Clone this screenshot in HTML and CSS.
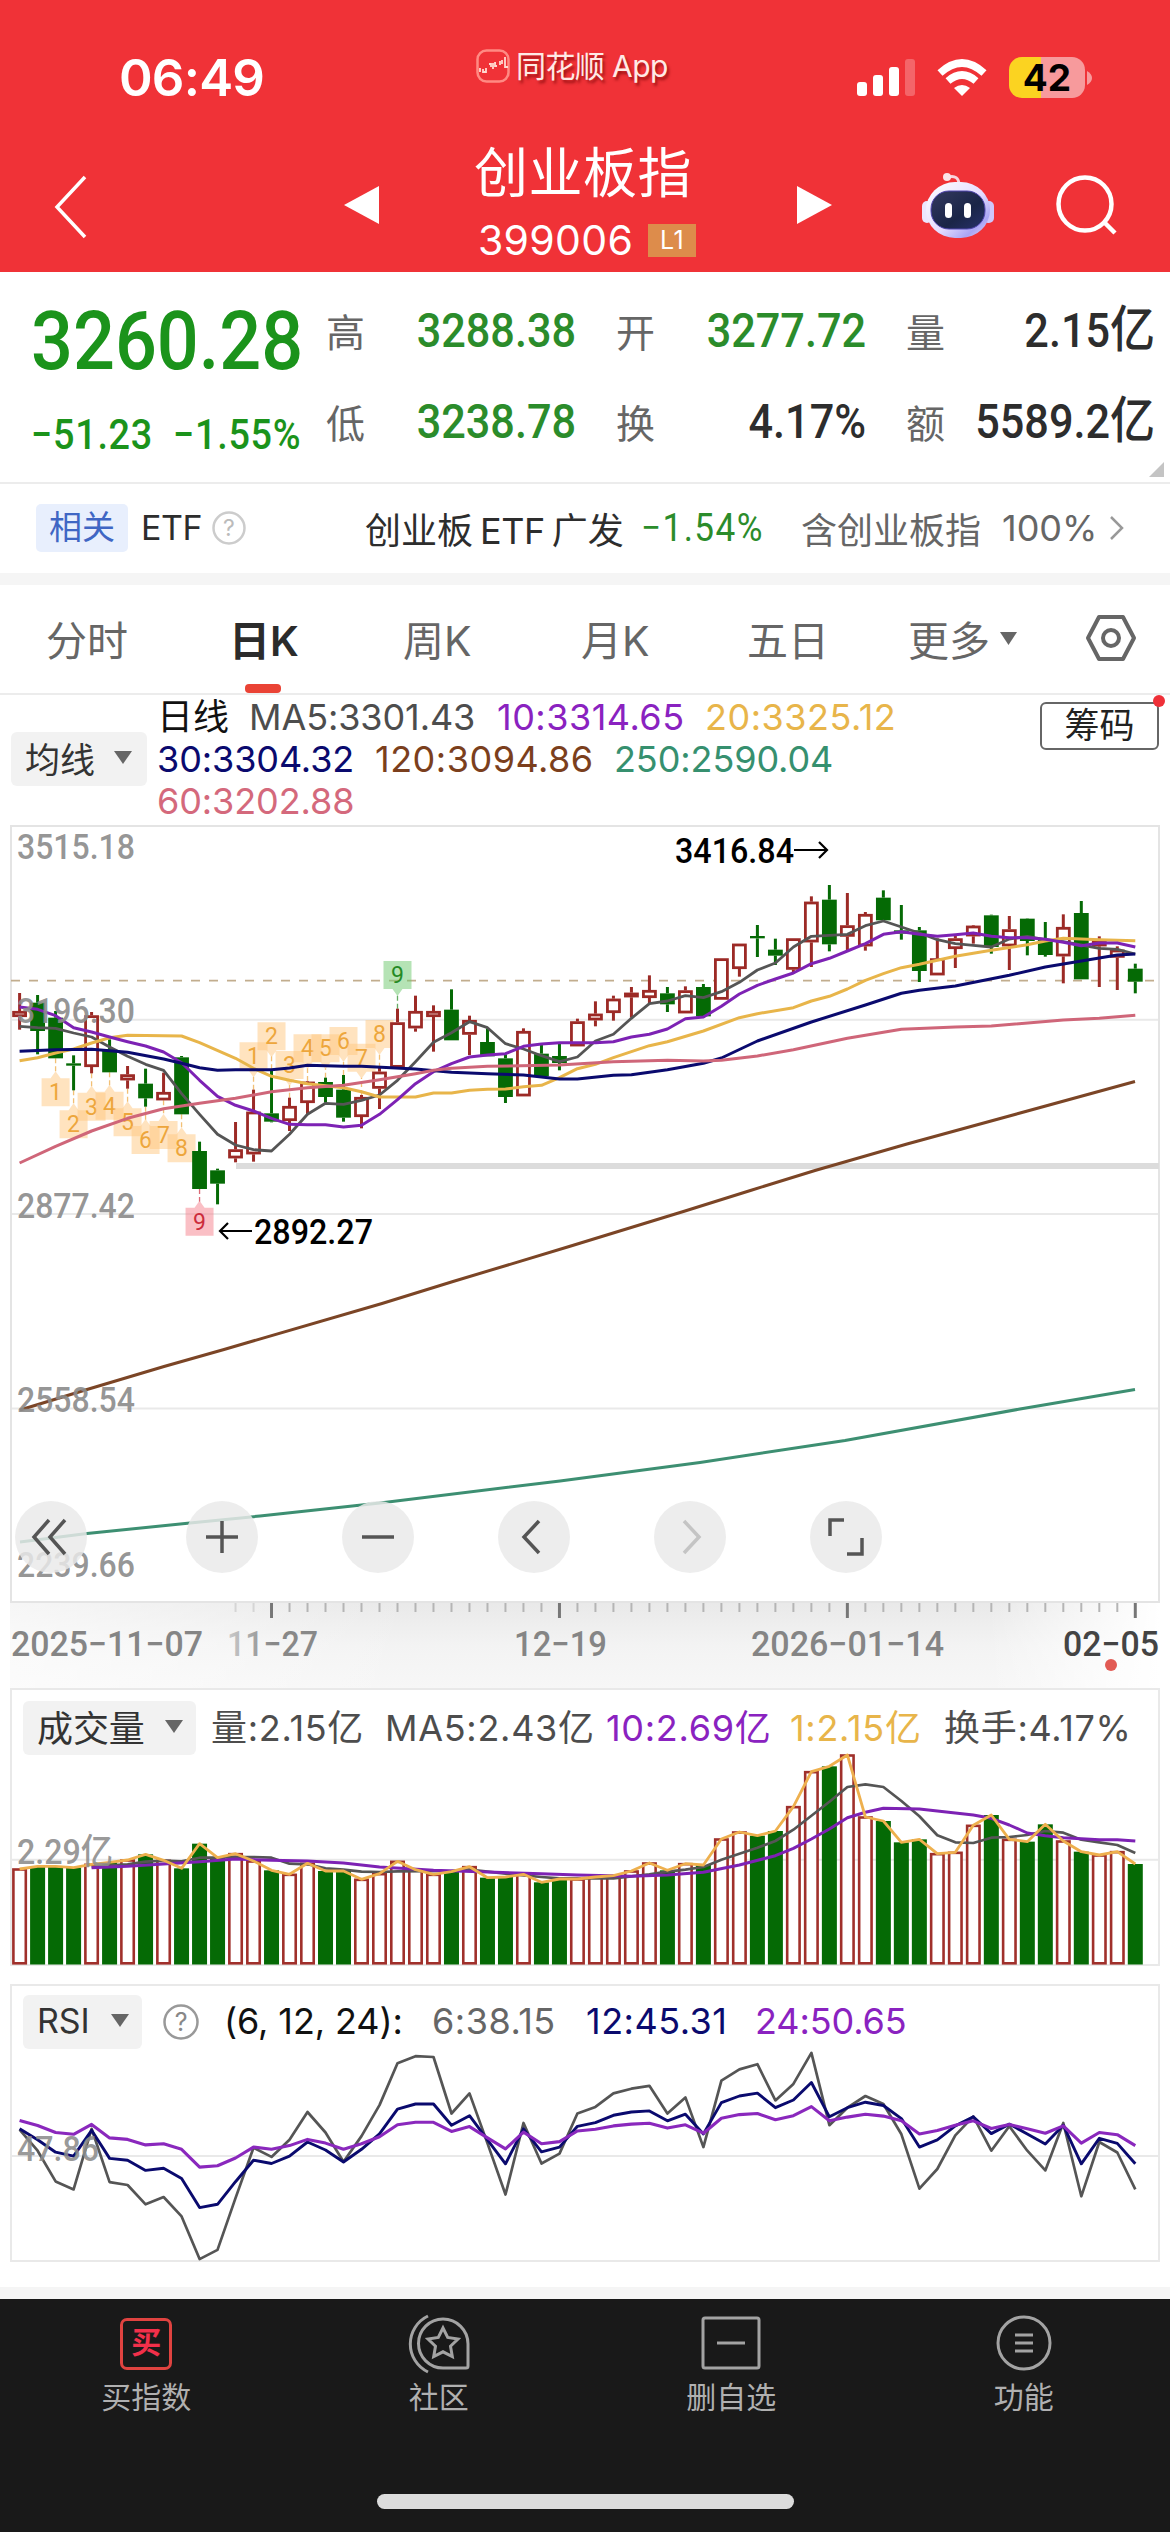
FILE: index.html
```html
<!DOCTYPE html>
<html lang="zh-CN">
<head>
<meta charset="utf-8">
<title>创业板指 399006</title>
<link rel="stylesheet" href="styles.css">
</head>
<body>
<header class="header">
  <div class="status">
    <span class="clock">06:49</span>
    <span class="brand">
      <svg width="34" height="34" viewBox="0 0 34 34" fill="none" stroke="#ffd9d0"><rect x="1.5" y="1.5" width="31" height="31" rx="9" stroke="#ff8a83" stroke-width="2.5"/><path d="M4 19v4M7 20v3h3v-4M13 15h2v3M17 14v6M20 14h-1v3h2M24 12v4M26 11v4M29 8v10h3" stroke-width="1.8"/></svg>
      <span>同花顺 App</span>
    </span>
    <span class="signals">
      <svg width="58" height="37" viewBox="0 0 58 37" fill="#fff"><rect x="0" y="23" width="10" height="14" rx="3"/><rect x="16" y="16" width="10" height="21" rx="3"/><rect x="32" y="8" width="10" height="29" rx="3"/><rect x="48" y="0" width="10" height="37" rx="3" opacity=".25"/></svg>
      <svg width="50" height="37" viewBox="0 0 50 37" fill="none" stroke="#fff" stroke-width="7.5"><path d="M3 14Q25-6 47 14"/><path d="M11 22Q25 10 39 22"/><path d="M25 37L17 29Q25 23 33 29Z" fill="#fff" stroke="none"/></svg>
      <span class="battery">42</span>
      <svg class="cap" width="5" height="14" viewBox="0 0 5 14"><path d="M0 0Q5 3 5 7T0 14Z" fill="#f79a9c"/></svg>
    </span>
  </div>
  <div class="titlebar">
    <svg class="back" width="34" height="64" viewBox="0 0 34 64" fill="none" stroke="#fff" stroke-width="3.5"><path d="M31 2L3 32L31 62"/></svg>
    <svg class="prev" width="36" height="40" viewBox="0 0 36 40"><path d="M35 1V39L0 20Z" fill="#fff"/></svg>
    <div class="title">
      <h1>创业板指</h1>
      <div class="code"><span>399006</span><em>L1</em></div>
    </div>
    <svg class="next" width="36" height="40" viewBox="0 0 36 40"><path d="M1 1V39L36 20Z" fill="#fff"/></svg>
    <svg class="robot" width="74" height="68" viewBox="0 0 74 68">
      <defs><linearGradient id="shell" x1="0" y1="0" x2="1" y2="1"><stop offset="0" stop-color="#fff"/><stop offset=".55" stop-color="#e4dcff"/><stop offset=".8" stop-color="#a9a5f5"/><stop offset="1" stop-color="#f3dcf5"/></linearGradient><linearGradient id="face" x1="0" y1="0" x2="1" y2="1"><stop offset="0" stop-color="#34395f"/><stop offset=".6" stop-color="#1a2547"/><stop offset="1" stop-color="#27306b"/></linearGradient></defs>
      <path d="M27 6C34 4 38 7 38 14" fill="none" stroke="#f8d4dc" stroke-width="3"/><circle cx="26" cy="6" r="4" fill="#fbe3e8"/>
      <rect x="1" y="30" width="10" height="22" rx="5" fill="#ece6ff"/><rect x="62" y="30" width="11" height="22" rx="5" fill="#cfc6fa"/>
      <rect x="5" y="11" width="64" height="56" rx="29" fill="url(#shell)"/>
      <rect x="10" y="20" width="54" height="38" rx="18" fill="url(#face)" stroke="#5146b0" stroke-width="1"/>
      <rect x="24" y="32" width="7" height="15" rx="3.5" fill="#fff"/><rect x="43" y="32" width="7" height="15" rx="3.5" fill="#fff"/>
    </svg>
    <svg class="search" width="62" height="62" viewBox="0 0 62 62" fill="none" stroke="#fff" stroke-width="4.5"><circle cx="30" cy="30" r="26.5"/><path d="M49 48L60 59"/></svg>
  </div>
</header>

<section class="quote">
  <div class="last">
    <div class="price din">3260.28</div>
    <div class="change"><span class="din">−51.23</span><span class="din">−1.55%</span></div>
  </div>
  <div class="stats">
    <span class="k">高</span><span class="v down din">3288.38</span>
    <span class="k">开</span><span class="v down din">3277.72</span>
    <span class="k">量</span><span class="v din wide">2.15<i>亿</i></span>
    <span class="k">低</span><span class="v down din">3238.78</span>
    <span class="k">换</span><span class="v din">4.17%</span>
    <span class="k">额</span><span class="v din wide">5589.2<i>亿</i></span>
  </div>
  <svg class="corner" width="15" height="15" viewBox="0 0 15 15"><path d="M15 0V15H0Z" fill="#c4c4c4"/></svg>
</section>

<section class="related">
  <span class="tag">相关</span><span class="etf">ETF</span>
  <svg class="help" width="34" height="34" viewBox="0 0 34 34"><circle cx="17" cy="17" r="15.5" fill="none" stroke="#ccc" stroke-width="2.5"/><text x="17" y="25" text-anchor="middle" font-size="23" fill="#bbb">?</text></svg>
  <span class="fund">创业板<b>ETF</b>广发</span><span class="pct din">−1.54%</span><span class="holds">含创业板指</span><span class="weight">100%</span>
  <svg width="16" height="26" viewBox="0 0 16 26" fill="none" stroke="#999" stroke-width="2.5"><path d="M2 2L13 13L2 24"/></svg>
</section>
<div class="strip"></div>

<nav class="tabs">
  <span class="tab">分时</span><span class="tab on">日K</span><span class="tab">周K</span><span class="tab">月K</span><span class="tab">五日</span>
  <span class="tab more">更多<svg width="19" height="13" viewBox="0 0 19 13"><path d="M1 0H18L9.500 13Z" fill="#666"/></svg></span>
  <svg class="gear" width="52" height="48" viewBox="0 0 52 48" fill="none" stroke="#666" stroke-width="4"><path d="M14 3H38L49 24L38 45H14L3 24Z" stroke-linejoin="round"/><circle cx="26" cy="24" r="8"/></svg>
</nav>

<section class="ma">
  <span class="pick">均线<svg width="18" height="13" viewBox="0 0 18 13"><path d="M0 0H18L9 13Z" fill="#666"/></svg></span>
  <div class="lines">
    <div class="row r1"><span class="c-black">日线</span><span class="c-gray">MA5:3301.43</span><span class="c-purple loose">10:3314.65</span><span class="c-gold loose">20:3325.12</span></div>
    <div class="row r2"><span class="c-navy">30:3304.32</span><span class="c-brown loose">120:3094.86</span><span class="c-teal">250:2590.04</span></div>
    <div class="row r2"><span class="c-pink">60:3202.88</span></div>
  </div>
  <span class="chips">筹码</span>
</section>

<section class="kline">
  <svg id="kline" width="1170" height="778" viewBox="0 824 1170 778"></svg>
  <div class="tools">
    <span class="tool"><svg width="40" height="40" viewBox="0 0 40 40"><path d="M18 3L3 20L18 37M34 3L19 20L34 37"/></svg></span>
    <span class="tool"><svg width="40" height="40" viewBox="0 0 40 40"><path d="M4 20H36M20 4V36"/></svg></span>
    <span class="tool"><svg width="40" height="40" viewBox="0 0 40 40"><path d="M4 20H36"/></svg></span>
    <span class="tool"><svg width="40" height="40" viewBox="0 0 40 40"><path d="M25 4L10 20L25 36"/></svg></span>
    <span class="tool off"><svg width="40" height="40" viewBox="0 0 40 40"><path d="M14 4L29 20L14 36"/></svg></span>
    <span class="tool"><svg width="40" height="40" viewBox="0 0 40 40"><path d="M18 3H4V19M36 21V37H21"/></svg></span>
  </div>
</section>
<section class="axis"><svg id="axis" width="1170" height="85" viewBox="0 1602 1170 85"></svg></section>

<section class="panel volume">
  <div class="legend">
    <span class="pick">成交量<svg width="18" height="13" viewBox="0 0 18 13"><path d="M0 0H18L9 13Z" fill="#666"/></svg></span>
    <span class="c-gray v1">量:2.15亿</span><span class="c-gray v2">MA5:2.43亿</span><span class="c-purple v3">10:2.69亿</span><span class="c-gold v4">1:2.15亿</span><span class="c-gray">换手:4.17%</span>
  </div>
  <svg id="volume" class="plot" width="1170" height="278" viewBox="0 1687 1170 278"></svg>
</section>

<section class="panel rsi">
  <div class="legend">
    <span class="pick">RSI<svg width="18" height="13" viewBox="0 0 18 13"><path d="M0 0H18L9 13Z" fill="#666"/></svg></span>
    <svg class="help2" width="38" height="38" viewBox="0 0 38 38"><circle cx="19" cy="19" r="16.500" fill="none" stroke="#999" stroke-width="2.5"/><text x="19" y="28" text-anchor="middle" font-size="25" fill="#888">?</text></svg>
    <span class="c-black p1">(6, 12, 24):</span><span class="c-mid p2">6:38.15</span><span class="c-navy p3">12:45.31</span><span class="c-purple">24:50.65</span>
  </div>
  <svg id="rsi" class="plot" width="1170" height="278" viewBox="0 1983 1170 278"></svg>
</section>
<div class="strip"></div>

<footer class="dock">
  <div class="items">
    <span class="item"><i class="buy">买</i>买指数</span>
    <span class="item"><svg width="62" height="60" viewBox="0 0 62 60" fill="none" stroke="#a3a3a3" stroke-width="3"><path d="M20 2A31 31 0 0 0 20 58"/><path d="M35 5A24.500 24.500 0 0 0 35 54H58Q60 54 60 52V30A25 25 0 0 0 35 5Z"/><path d="M35 14L39.700 23.500L50 25L42.500 32.300L44.300 42.500L35 37.800L25.700 42.500L27.500 32.300L20 25L30.300 23.500Z"/></svg>社区</span>
    <span class="item"><svg width="60" height="60" viewBox="0 0 60 60" fill="none" stroke="#a3a3a3" stroke-width="3"><rect x="2" y="4" width="56" height="50" rx="2"/><path d="M16 29H44"/></svg>删自选</span>
    <span class="item"><svg width="60" height="60" viewBox="0 0 60 60" fill="none" stroke="#a3a3a3" stroke-width="3"><circle cx="30" cy="29" r="26"/><path d="M21 21H39M21 29H39M21 37H39"/></svg>功能</span>
  </div>
  <div class="home"></div>
</footer>
<script src="charts.js"></script>
</body>
</html>
```
FILE: styles.css
```css
* { box-sizing: border-box; }
body { margin: 0; width: 1170px; height: 2532px; background: #fff; color: #333; font-family: Inter, "Noto Sans CJK SC", sans-serif; overflow: hidden; }
svg { display: block; flex: none; }
svg text { font-family: Inter, "Noto Sans CJK SC", sans-serif; }
em, i { font-style: normal; }
span { white-space: nowrap; }
.din { font-family: Roboto, "Noto Sans CJK SC", sans-serif; display: inline-block; transform: scaleX(.9); transform-origin: left center; }

.header { height: 272px; background: #f03237; color: #fff; }
.status { height: 140px; display: flex; align-items: flex-start; }
.clock { margin-left: 119px; width: 357px; padding-top: 46px; font-size: 51px; line-height: 64px; font-weight: 600; letter-spacing: -.8px; }
.brand { display: flex; gap: 6px; align-items: center; padding-top: 42px; font-size: 30px; line-height: 48px; width: 381px; color: #ffeae6; letter-spacing: -.6px; text-shadow: 2px 3px 3px rgba(110, 0, 0, .65); }
.signals { display: flex; align-items: center; padding-top: 57px; }
.signals svg:nth-child(2) { margin: 0 22px 0 22px; }
.battery { width: 76px; height: 41px; border-radius: 13px; background: linear-gradient(90deg, #fbd321 42%, #f79a9c 42%); color: #000; font-size: 37px; line-height: 41px; font-weight: 700; text-align: center; }
.cap { margin-left: 2px; }
.titlebar { display: flex; height: 132px; align-items: flex-start; }
.back { margin: 35px 0 0 54px; }
.prev { margin: 45px 0 0 256px; }
.title { margin-left: 94px; width: 224px; }
.title h1 { margin: 3px 0 0; font-size: 54px; line-height: 62px; font-weight: 400; letter-spacing: .5px; }
.code { display: flex; margin: 12px 0 0 4px; height: 46px; align-items: center; font-size: 41px; letter-spacing: .3px; }
.code span { width: 170px; }
.code em { width: 48px; height: 33px; background: #dd8c4b; font-size: 25px; line-height: 33px; text-align: center; }
.next { margin: 45px 0 0 98px; }
.robot { margin: 31px 0 0 89px; }
.search { margin: 34px 0 0 60px; }

.quote { height: 212px; border-bottom: 2px solid #ececec; display: flex; position: relative; }
.last { width: 326px; padding-left: 31px; color: #1b931b; }
.price { font-size: 82px; line-height: 90px; margin-top: 24px; font-weight: 500; }
.change { display: flex; font-size: 42px; line-height: 50px; margin-top: 24px; font-weight: 500; letter-spacing: .8px; }
.change span:first-child { width: 142px; }
.stats { display: grid; grid-template-columns: 46px 204px 86px 204px 86px 203px; grid-template-rows: 91px 91px; padding-top: 13px; align-items: center; width: 830px; }
.k { font-size: 39px; color: #666; padding: 0 0 2px 40px; }
.k:nth-child(6n+1) { padding-left: 0; }
.v { font-size: 48px; line-height: 60px; text-align: right; transform-origin: right center; font-weight: 500; color: #2d2d2d; }
.v i { font-size: 50px; font-weight: 500; }
.down { color: #2b8c2b; }
.corner { position: absolute; right: 6px; bottom: 5px; }

.related { height: 89px; display: flex; align-items: center; font-size: 35px; padding: 0 0 2px 36px; color: #2d2d2d; }
.tag { width: 92px; height: 48px; border-radius: 5px; background: #e8effd; color: #3f66c4; font-size: 33px; line-height: 46px; text-align: center; margin-right: 13px; }
.etf { width: 71px; font-size: 34px; letter-spacing: -.5px; }
.help { margin-right: 119px; }
.fund { width: 276px; font-size: 36px; }
.fund b { font-weight: 400; font-size: 36px; margin: 0 7px 0 7px; letter-spacing: -.5px; }
.pct { width: 160px; font-size: 39px; color: #2b8c2b; letter-spacing: 1.6px; }
.holds { width: 201px; font-size: 36px; color: #666; }
.weight { width: 107px; font-size: 36px; color: #666; }
.strip { height: 12px; background: #f5f5f5; }

.tabs { height: 110px; border-bottom: 2px solid #ececec; position: relative; display: grid; grid-template-columns: 183px 174px 178px 166px 161px 177px 60px; padding: 0 0 2px 46px; align-items: center; font-size: 41px; color: #666; }
.tab.on { color: #2b2b2b; font-weight: 600; position: relative; }
.tab.on::after { content: ""; position: absolute; left: 16px; top: 76px; width: 36px; height: 9px; border-radius: 4px; background: #ea4335; }
.more { display: flex; align-items: center; gap: 9px; }

.ma { height: 130px; display: flex; position: relative; }
.pick { height: 54px; border-radius: 6px; background: #f2f2f2; color: #333; font-size: 36px; display: flex; align-items: center; justify-content: space-between; padding: 0 15px 3px 14px; flex: none; }
.ma .pick { margin: 37px 10px 0 11px; width: 136px; font-size: 35px; }
.lines { padding-top: 1px; font-size: 36px; letter-spacing: -.1px; }
.loose { letter-spacing: .5px; }
.row { height: 42px; line-height: 42px; display: grid; }
.r1 { grid-template-columns: 92px 248px 208px 200px; }
.r2 { grid-template-columns: 218px 239px 240px; }
.chips { position: absolute; left: 1040px; top: 7px; width: 119px; height: 48px; border: 2px solid #666; border-radius: 6px; text-align: center; font-size: 35px; line-height: 42px; color: #222; }
.chips::after { content: ""; position: absolute; right: -8px; top: -9px; width: 12px; height: 12px; border-radius: 50%; background: #ef3038; }
.c-black { color: #111; } .c-gray { color: #4d4d4d; } .c-mid { color: #666; } .c-purple { color: #8a22c0; } .c-gold { color: #e8b54a; }
.c-navy { color: #0a0a6e; } .c-brown { color: #7b3f1d; } .c-teal { color: #36906f; } .c-pink { color: #d4697c; }

.kline { position: relative; height: 778px; }
.tools { position: absolute; left: 15px; top: 676px; display: flex; gap: 84px; }
.tool { width: 72px; height: 72px; border-radius: 50%; background: rgba(233, 233, 233, .84); display: flex; align-items: center; justify-content: center; }
.tool:first-child { margin-right: 15px; }
.tool path { fill: none; stroke: #555; stroke-width: 3.5; }
.tool.off path { stroke: #c4c4c4; }
.axis { height: 85px; }
.panel { position: relative; height: 278px; margin-bottom: 18px; }
.rsi { margin-bottom: 25px; }
.plot { position: absolute; left: 0; top: 0; z-index: -1; }
.legend { display: flex; align-items: center; padding: 11px 0 0 23px; font-size: 36px; letter-spacing: -.1px; }
.legend > span:not(.pick) { padding-bottom: 3px; }
.volume .legend > span:not(.pick) { letter-spacing: .7px; padding-bottom: 5px; }
.volume .pick { width: 173px; margin-right: 15px; padding-right: 13px; }
.v1 { width: 174px; } .v2 { width: 221px; } .v3 { width: 184px; } .v4 { width: 154px; }
.rsi .pick { width: 119px; margin-right: 20px; font-size: 34px; padding-right: 13px; }
.help2 { margin-right: 24px; }
.p1 { width: 208px; } .p2 { width: 154px; letter-spacing: .5px; } .p3 { width: 169px; letter-spacing: .5px; }

.dock { height: 234px; background: #191919; position: relative; }
.items { display: grid; grid-template-columns: repeat(4, 1fr); padding-top: 15px; }
.item { display: flex; flex-direction: column; align-items: center; color: #b0b0b0; font-size: 30px; line-height: 46px; }
.item svg { margin-bottom: 0; }
.buy { width: 52px; height: 52px; border: 3px solid #e04340; border-radius: 7px; color: #f2304a; font-size: 30px; font-weight: 700; line-height: 43px; text-align: center; margin: 4px 0; }
.home { width: 417px; height: 15px; border-radius: 8px; background: #dcdcdc; margin: 74px auto 0; }
```
FILE: charts.js
```js
const NS = 'http://www.w3.org/2000/svg';
const GREEN = '#056a05', RED = '#9c2a26';
const GRAY = '#555', PURPLE = '#7d22b4', GOLD = '#e8b54a', NAVY = '#0a0a6e', PINK = '#cf6679';
const X = i => 19.6 + 17.995 * i;

function add(svg, tag, attrs, text) {
  const el = document.createElementNS(NS, tag);
  for (const k in attrs) el.setAttribute(k, attrs[k]);
  if (text) el.textContent = text;
  svg.appendChild(el);
}
function line(svg, x1, y1, x2, y2, stroke, width, extra) {
  add(svg, 'line', Object.assign({ x1, y1, x2, y2, stroke, 'stroke-width': width }, extra));
}
function curve(svg, points, stroke, width) {
  add(svg, 'polyline', { points: points.map(p => p.map(n => n.toFixed(1)).join()).join(' '), fill: 'none', stroke, 'stroke-width': width, 'stroke-linejoin': 'round' });
}
function label(svg, text, x, y, length, fill, weight, size) {
  add(svg, 'text', { x, y, textLength: length, lengthAdjust: 'spacingAndGlyphs', fill, 'font-weight': weight || 400, 'font-size': size || 35, style: 'font-family: Roboto, "Noto Sans CJK SC", sans-serif' }, text);
}
// Series are written as flat lists: index, value, index, value...
function series(flat, y) {
  const out = [];
  for (let k = 0; k < flat.length; k += 2) out.push([X(flat[k]), y(flat[k + 1])]);
  return out;
}

/* Candles: [up?, high, body top, body bottom, low], three units per pixel */
const candles = [
[1,516,570,588,626],[0,522,545,630,700],[0,570,590,712,712],[0,703,727,734,808],[1,573,583,738,757],[0,655,685,754,754],[1,735,760,778,803],[0,743,788,832,857],[1,755,813,838,838],[0,705,709,880,880],
[0,962,990,1104,1104],[0,1043,1048,1088,1150],[1,903,985,1012,1024],[1,806,872,1000,1022],[0,745,877,902,904],[1,830,855,900,930],[1,780,782,846,880],[0,770,783,828,845],[0,762,806,890,902],[1,822,828,888,922],
[1,740,752,803,864],[1,563,604,740,740],[1,524,570,622,632],[1,553,570,588,692],[0,505,566,658,658],[1,584,597,641,702],[0,622,663,706,706],[0,700,712,828,846],[1,622,630,826,826],[0,672,698,766,766],
[0,668,705,726,748],[1,593,601,676,676],[1,541,578,598,616],[1,524,533,576,599],[1,498,515,529,590],[1,463,507,531,548],[0,498,517,550,573],[1,496,508,577,577],[0,489,498,586,590],[1,412,412,536,536],
[1,368,368,444,467],[0,312,345,352,408],[0,353,386,404,432],[1,352,352,446,458],[1,226,242,364,438],[0,192,236,370,391],[1,216,313,347,388],[1,273,279,376,389],[0,208,230,298,300],[0,252,328,338,356],
[0,318,328,450,483],[1,352,412,463,463],[1,345,352,384,441],[1,312,314,346,368],[0,281,283,378,398],[1,285,325,376,447],[0,292,293,360,403],[0,303,354,402,407],[1,280,318,406,487],[0,240,276,475,475],
[1,346,358,376,498],[1,376,386,410,507],[0,428,443,482,517]];

(function drawKline() {
  const s = document.getElementById('kline'), Y = v => 820 + v / 3;
  for (const y of [1018.7, 1213, 1407.5]) line(s, 11, y, 1159, y, '#e9e9e9', 2);
  add(s, 'rect', { x: 11, y: 825, width: 1148, height: 776, fill: 'none', stroke: '#e4e4e4', 'stroke-width': 2 });
  line(s, 11, 979.7, 1159, 979.7, '#c2ad8e', 1.8, { 'stroke-dasharray': '9 9' });
  line(s, 236, 1165, 1159, 1165, '#dcdcdc', 6);
  const setup = (n, i, top, below, fill, ink, from) => {
    const x = X(i), y = Y(top);
    line(s, x, Y(from), x, below ? y - 6 : y + 34, ink, 1.3, { 'stroke-dasharray': '5 3', opacity: .7 });
    add(s, 'path', { d: `M${x - 14} ${y}h28v28h-28z` + (below ? `M${x - 5} ${y}l5 -7l5 7z` : `M${x - 5} ${y + 28}l5 7l5 -7z`), fill, opacity: .5 });
    add(s, 'text', { x, y: y + 22, 'text-anchor': 'middle', 'font-size': 23, fill: ink, style: 'font-family: Roboto, sans-serif' }, String(n));
  };
  [772, 868, 815, 812, 862, 915, 900, 940].forEach((t, k) => setup(k + 1, k + 2, t, true, '#ffc880', '#eda63c', candles[k + 2][4]));
  [664, 604, 690, 640, 640, 618, 668, 597].forEach((t, k) => setup(k + 1, k + 13, t, false, '#ffc880', '#eda63c', candles[k + 13][1]));
  setup(9, 10, 1160, true, '#f5808c', '#cc2c3c', 1104);
  setup(9, 21, 420, false, '#6cc86c', '#258a25', 563);
  candles.forEach(([up, h, t, b, l], i) => {
    const x = X(i), c = up ? RED : GREEN;
    if (h < t) line(s, x, Y(h), x, Y(t), c, 3);
    if (l > b) line(s, x, Y(b), x, Y(l), c, 3);
    if (up) add(s, 'rect', { x: x - 6, y: Y(t) + 1.3, width: 12, height: Math.max((b - t) / 3 - 2.6, 1), fill: '#fff', stroke: c, 'stroke-width': 2.8 });
    else add(s, 'rect', { x: x - 7.4, y: Y(t), width: 14.8, height: (b - t) / 3, fill: c });
  });
  const ma5 = [616,620,622,636,648,678,706,730,748,818,880,940,972,986,990,940,880,847,850,838,822,778,722,664,635,602,620,668,684,704,722,708,660,640,592,548,540,524,530,512,484,447,426,378,346,343,340,314,300,318,336,356,368,373,378,354,346,356,362,372,382,385,399];
  const ma10 = [558,565,584,620,633,648,662,675,693,725,778,826,853,870,892,910,911,911,918,913,880,836,788,752,728,708,702,698,676,669,665,665,665,662,648,640,624,593,588,556,519,493,474,456,428,412,390,368,340,332,340,346,341,336,346,350,350,355,364,374,366,366,378];
  curve(s, ma5.map((v, i) => [X(i), Y(v)]), GRAY, 2.8);
  curve(s, series([0,719,1,710,2,696,3,684,4,666,5,650,6,643,9,645,10,665,12,712,13,742,14,766,15,778,16,788,18,800,19,812,20,828,22,828,23,816,24,816,25,808,26,805,27,804,28,797,29,793,30,770,31,743,32,730,33,710,35,674,36,662,38,630,40,590,41,578,43,560,44,540,45,526,46,504,47,478,48,458,49,440,50,430,52,406,54,388,56,371,57,360,58,352,60,356,62,359], Y), GOLD, 3);
  curve(s, ma10.map((v, i) => [X(i), Y(v)]), PURPLE, 3);
  curve(s, series([0,691,2,686,4,685,6,694,8,714,9,727,10,740,11,748,12,746,14,746,15,741,16,733,18,736,19,736,22,744,24,754,26,758,28,762,30,774,31,774,33,763,34,761,36,746,38,727,39,711,41,660,44,603,47,552,49,517,50,508,52,495,55,463,57,438,59,420,61,402,62,399], Y), NAVY, 3);
  curve(s, series([0,1026,2,976,4,930,6,892,8,863,10,847,12,832,14,812,16,800,18,793,20,776,22,758,23,748,24,742,26,736,30,732,33,722,36,718,38,720,39,718,41,705,43,686,46,652,49,625,52,618,54,615,58,597,60,592,62,583], Y), PINK, 3);
  curve(s, [[20,1409],[87,1388.5],[164,1365.5],[224,1348.5],[382,1302.5],[453,1280.5],[570,1245.3],[685,1210],[752,1189],[815,1169.5],[907,1143],[1135,1080.5]], '#7b4526', 3);
  curve(s, [[20,1541],[87,1532.500],[190,1522],[260,1515],[380,1502],[560,1480],[700,1461.500],[845,1439.500],[1020,1408],[1135,1388.5]], '#3d8f72', 3);
  [['3515.18', 859], ['3196.30', 1023], ['2877.42', 1217.5], ['2558.54', 1412], ['2239.66', 1576.5]].forEach(([t, y]) => label(s, t, 17, y - 1, 118, 'rgba(140,140,140,.92)', 500));
  label(s, '2892.27', 254, 1242.5, 119, '#000', 500);
  label(s, '3416.84', 675, 861.5, 119, '#000', 500);
  add(s, 'path', { d: 'M252 1230H220M228 1222L220 1230L228 1238M794 849H827M819 841L827 849L819 857', fill: 'none', stroke: '#000', 'stroke-width': 2.2 });
})();

(function drawAxis() {
  const s = document.getElementById('axis');
  s.innerHTML = '<defs><linearGradient id="ax" x1="0" y1="0" x2="0" y2="1"><stop offset="0" stop-color="#e9e9e9"/><stop offset=".5" stop-color="#f3f3f3"/><stop offset="1" stop-color="#f7f7f7"/></linearGradient><linearGradient id="fl"><stop offset="0" stop-color="#fff" stop-opacity=".6"/><stop offset=".35" stop-color="#fff" stop-opacity="0"/><stop offset=".85" stop-color="#fff" stop-opacity="0"/><stop offset="1" stop-color="#fff"/></linearGradient><linearGradient id="fade"><stop offset="0" stop-color="#ccc"/><stop offset=".5" stop-color="#888"/></linearGradient></defs>';
  add(s, 'rect', { x: 10, y: 1602, width: 1150, height: 85, fill: 'url(#ax)' });
  add(s, 'rect', { x: 10, y: 1602, width: 1150, height: 85, fill: 'url(#fl)' });
  for (let i = 12; i < 63; i++) {
    const major = i % 16 === 14;
    line(s, X(i), 1602, X(i), major ? 1617 : 1611, major ? '#777' : i < 14 ? '#d5d5d5' : '#b5b5b5', major ? 3 : 2);
  }
  label(s, '2025−11−07', 11, 1654.5, 192, '#858585', 500);
  label(s, '11−27', 227, 1654.5, 91, 'url(#fade)', 500);
  label(s, '12−19', 514, 1654.5, 93, '#858585', 500);
  label(s, '2026−01−14', 751, 1654.5, 193, '#858585', 500);
  label(s, '02−05', 1063, 1654.5, 96, '#444', 500);
  add(s, 'circle', { cx: 1111, cy: 1664, r: 6, fill: '#e25b54' });
})();

(function drawVolume() {
  const s = document.getElementById('volume'), Y = v => 1680 + v / 3;
  const vol = [564,556,556,560,550,544,537,520,538,562,488,530,518,540,568,580,547,570,570,595,578,541,566,580,572,557,590,588,580,604,594,594,588,584,570,546,568,548,552,474,453,464,450,377,272,256,222,408,420,484,475,518,514,433,402,475,482,430,480,512,522,512,549];
  add(s, 'rect', { x: 11, y: 1688, width: 1148, height: 276, fill: 'none', stroke: '#e9e9e9', 'stroke-width': 2 });
  line(s, 11, 1858.7, 1159, 1858.7, '#e9e9e9', 2);
  vol.forEach((v, i) => {
    const x = X(i), y = Y(v);
    if (candles[i][0]) add(s, 'rect', { x: x - 6.2, y: y + .5, width: 12.4, height: 1961.8 - y, fill: '#fff', stroke: '#a0302b', 'stroke-width': 2.6 });
    else add(s, 'rect', { x: x - 7.5, y, width: 15, height: 1963.500 - y, fill: GREEN });
  });
  curve(s, series([4,558,5,553,6,550,7,542,8,539,9,541,10,530,11,530,12,528,13,528,14,530,15,548,16,550,17,562,18,566,19,572,20,573,21,571,24,570,25,566,27,578,29,588,30,592,33,592,34,586,35,580,36,572,37,566,38,558,39,536,40,518,41,500,42,480,43,446,44,404,45,362,46,318,47,310,48,318,49,360,50,406,51,463,52,484,53,486,54,470,55,468,56,462,57,450,58,455,59,476,60,484,61,492,62,516], Y), GRAY, 2.7);
  curve(s, series([4,560,6,556,8,549,10,542,12,534,14,538,16,540,18,546,20,558,23,568,26,573,29,578,31,582,34,586,36,582,38,574,40,552,42,524,43,502,44,474,45,444,46,410,47,394,48,382,50,384,52,396,53,402,54,412,55,432,56,456,57,464,58,470,60,476,61,476,62,480], Y), PURPLE, 3);
  curve(s, vol.map((v, i) => [X(i), Y(v)]), '#eeb04e', 2.8);
  label(s, '2.29亿', 17, 1862.5, 96, 'rgba(140,140,140,.9)', 500);
})();

(function drawRsi() {
  const s = document.getElementById('rsi'), Y = v => 1960 + v / 2.741;
  const rsi6 = [462,520,604,626,460,606,614,667,647,700,817,792,650,512,537,490,414,470,550,480,395,280,261,263,418,363,500,640,444,555,528,418,400,363,350,342,418,374,510,328,297,283,382,337,252,450,402,370,392,475,624,570,478,426,520,453,520,574,444,645,496,525,626];
  const rsi12 = [460,490,524,535,464,541,546,574,568,596,676,667,605,546,555,535,496,518,551,516,474,406,392,392,450,424,490,556,460,523,510,453,443,423,414,411,438,420,474,388,370,362,402,381,333,427,402,387,396,432,510,490,452,427,473,447,474,502,450,556,486,500,556];
  const rsi24 = [437,451,470,475,448,485,489,504,501,516,565,561,540,510,516,506,489,499,516,501,482,449,442,442,467,454,485,515,469,501,495,466,461,452,447,445,458,449,472,431,421,418,435,424,399,438,428,420,425,438,474,465,450,438,459,448,460,472,452,499,470,476,506];
  add(s, 'rect', { x: 11, y: 1984, width: 1148, height: 276, fill: 'none', stroke: '#e9e9e9', 'stroke-width': 2 });
  line(s, 11, 2155, 1159, 2155, '#e9e9e9', 2);
  curve(s, rsi6.map((v, i) => [X(i), Y(v)]), GRAY, 2.7);
  curve(s, rsi12.map((v, i) => [X(i), Y(v)]), NAVY, 2.9);
  curve(s, rsi24.map((v, i) => [X(i), Y(v)]), '#8a28bd', 3.1);
  label(s, '47.86', 17, 2160, 82, 'rgba(140,140,140,.9)', 500);
})();
```
